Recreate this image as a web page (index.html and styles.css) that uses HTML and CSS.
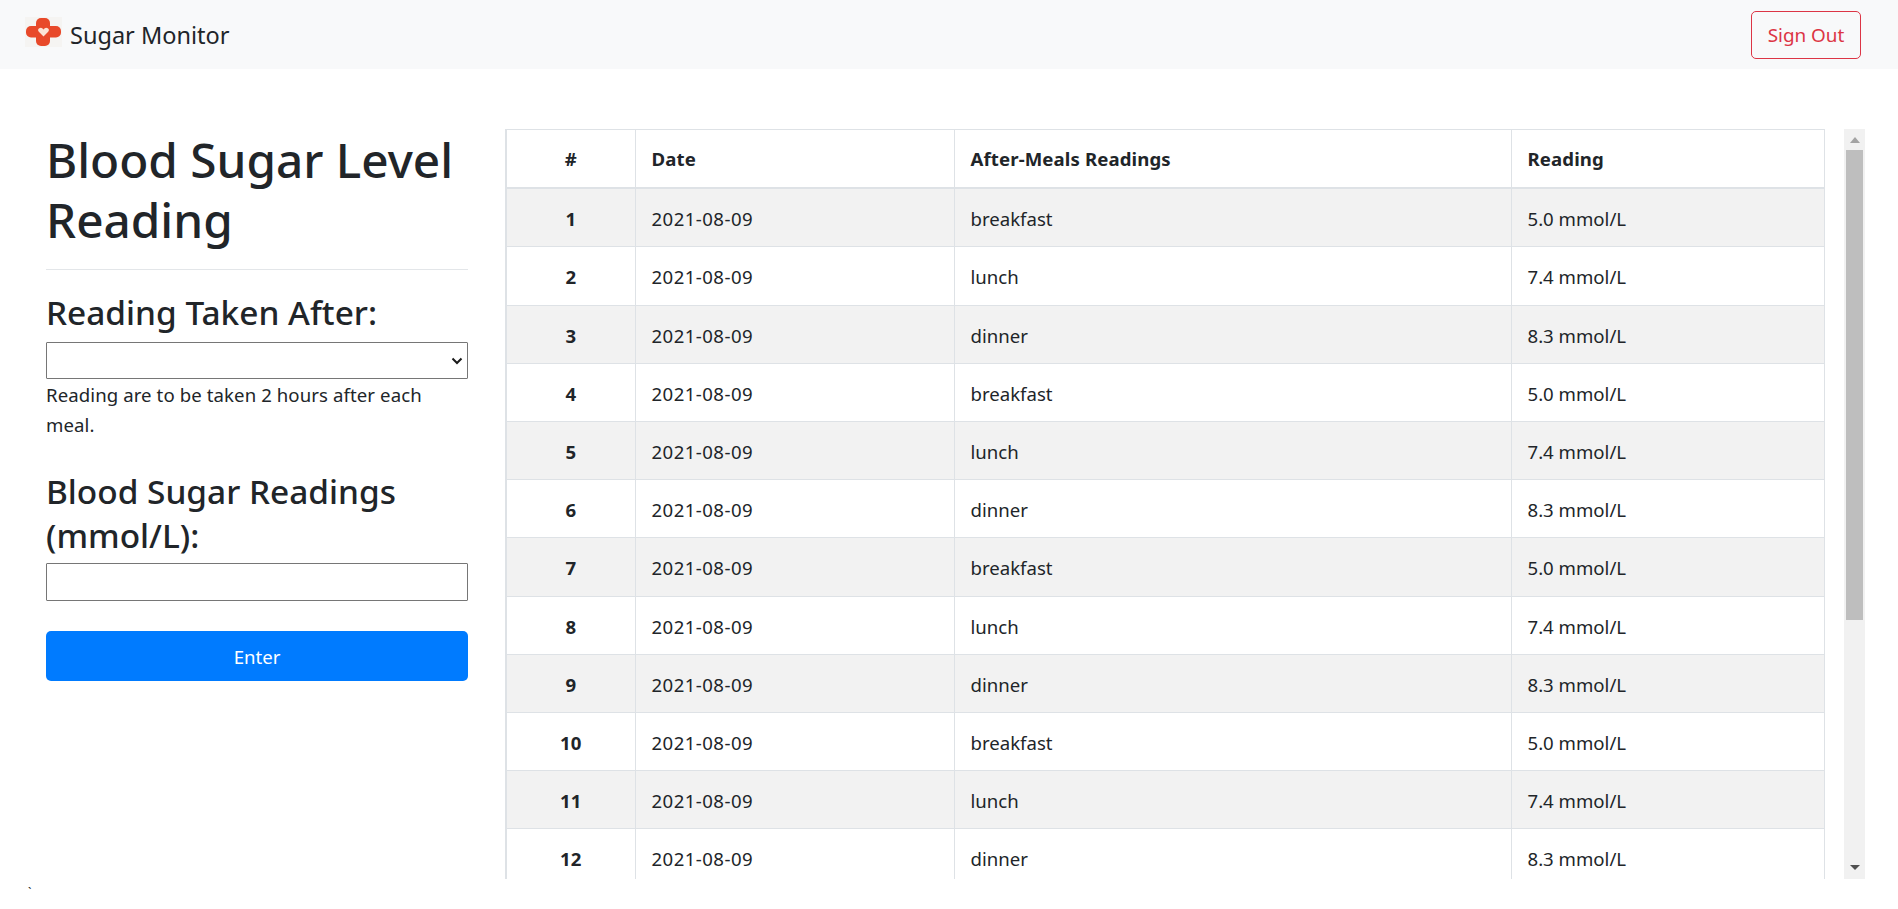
FILE: index.html
```html
<!DOCTYPE html>
<html lang="en">
<head>
<meta charset="utf-8">
<title>Sugar Monitor</title>
<link rel="stylesheet" href="styles.css">
</head>
<body>
<nav class="navbar">
  <a class="brand" href="#">
    <svg class="logo" viewBox="0 0 37 30" aria-hidden="true">
      <rect width="37" height="30" fill="#f5f4f2"/>
      <rect x="11" y="1" width="14" height="28" rx="5" fill="#e8492a"/>
      <rect x="1" y="9" width="35" height="11.5" rx="5" fill="#e8492a"/>
      <path d="M18.5 19.5 L13.8 14.8 Q12.2 12.6 14.2 11.2 Q16.8 10 18.5 12.4 Q20.2 10 22.8 11.2 Q24.8 12.6 23.2 14.8 Z" fill="#fbe3d6"/>
    </svg>
    <span>Sugar Monitor</span>
  </a>
  <button class="signout" type="button">Sign Out</button>
</nav>
<main class="layout">
  <section class="sidebar">
    <h1 class="title">Blood Sugar Level Reading</h1>
    <hr class="rule">
    <form class="reading-form">
      <label class="label label-first" for="meal">Reading Taken After:</label>
      <div class="select-wrap">
        <select class="control select" id="meal"><option></option></select>
        <svg class="chevron" viewBox="0 0 12 8" aria-hidden="true"><path d="M1.5 1.5 L6 6 L10.5 1.5" fill="none" stroke="#1a1a1a" stroke-width="2"/></svg>
      </div>
      <p class="hint">Reading are to be taken 2 hours after each meal.</p>
      <label class="label label-second" for="value">Blood Sugar Readings (mmol/L):</label>
      <input class="control input" id="value" type="text">
      <button class="enter" type="button">Enter</button>
    </form>
  </section>
  <section class="table-pane">
    <table class="readings">
      <thead>
        <tr><th class="c-num">#</th><th class="c-date">Date</th><th class="c-meal">After-Meals Readings</th><th>Reading</th></tr>
      </thead>
      <tbody>
        <tr><th>1</th><td class="date">2021-08-09</td><td>breakfast</td><td>5.0 mmol/L</td></tr>
        <tr><th>2</th><td class="date">2021-08-09</td><td>lunch</td><td>7.4 mmol/L</td></tr>
        <tr><th>3</th><td class="date">2021-08-09</td><td>dinner</td><td>8.3 mmol/L</td></tr>
        <tr><th>4</th><td class="date">2021-08-09</td><td>breakfast</td><td>5.0 mmol/L</td></tr>
        <tr><th>5</th><td class="date">2021-08-09</td><td>lunch</td><td>7.4 mmol/L</td></tr>
        <tr><th>6</th><td class="date">2021-08-09</td><td>dinner</td><td>8.3 mmol/L</td></tr>
        <tr><th>7</th><td class="date">2021-08-09</td><td>breakfast</td><td>5.0 mmol/L</td></tr>
        <tr><th>8</th><td class="date">2021-08-09</td><td>lunch</td><td>7.4 mmol/L</td></tr>
        <tr><th>9</th><td class="date">2021-08-09</td><td>dinner</td><td>8.3 mmol/L</td></tr>
        <tr><th>10</th><td class="date">2021-08-09</td><td>breakfast</td><td>5.0 mmol/L</td></tr>
        <tr><th>11</th><td class="date">2021-08-09</td><td>lunch</td><td>7.4 mmol/L</td></tr>
        <tr><th>12</th><td class="date">2021-08-09</td><td>dinner</td><td>8.3 mmol/L</td></tr>
      </tbody>
    </table>
  </section>
  <div class="scrollbar" aria-hidden="true">
    <span class="arrow arrow-up"></span>
    <span class="thumb"></span>
    <span class="arrow arrow-down"></span>
  </div>
</main>
<div class="stray">`</div>
</body>
</html>
```
FILE: styles.css
```css
* { box-sizing: border-box; }
html, body { height: 100%; }
body {
  margin: 0;
  overflow: hidden;
  background: #fff;
  color: #212529;
  font-family: "Noto Sans", "Open Sans", "Liberation Sans", sans-serif;
  font-size: 18.6px;
}
.navbar {
  height: 69px;
  background: #f8f9fa;
  display: flex;
  align-items: center;
  justify-content: space-between;
  padding: 0 37px 0 25px;
}
.brand {
  display: flex;
  align-items: center;
  gap: 8px;
  color: #212529;
  text-decoration: none;
  font-size: 23.5px;
}
.logo { width: 37px; height: 30px; display: block; margin-bottom: 5px; }
.signout {
  width: 110px;
  height: 48px;
  background: transparent;
  border: 1px solid #dc3545;
  border-radius: 5px;
  color: #dc3545;
  font: inherit;
  font-size: 18.9px;
}
.layout {
  display: flex;
  height: 750px;
  margin-top: 60px;
  padding-left: 46px;
}
.sidebar { flex: 0 0 422px; margin-right: 37px; }
.title {
  margin: 0;
  padding-top: 1px;
  font-size: 47.7px;
  font-weight: 500;
  line-height: 60px;
}
.rule {
  margin: 19px 0 0;
  border: 0;
  border-top: 1px solid #e3e6e9;
}
.reading-form { display: flex; flex-direction: column; }
.label {
  font-size: 33.4px;
  font-weight: 500;
  line-height: 44px;
}
.label-first { margin-top: 20px; margin-bottom: 8px; }
.label-second { margin-top: 29px; margin-bottom: 6px; }
.control {
  display: block;
  width: 100%;
  background: #fff;
  border: 1px solid #767676;
  border-radius: 1px;
  font: inherit;
}
.select-wrap { position: relative; }
.select { height: 37px; appearance: none; }
.chevron { position: absolute; right: 5px; top: 15px; width: 12px; height: 8px; pointer-events: none; }
.input { height: 38px; }
.hint {
  margin: 1px 0 0;
  line-height: 30px;
  letter-spacing: 0.09px;
}
.enter {
  margin-top: 30px;
  height: 50px;
  background: #007bff;
  border: 0;
  border-radius: 5px;
  color: #fff;
  font: inherit;
  font-size: 18.6px;
}
.table-pane { flex: 0 0 1320px; margin-right: 19px; overflow: hidden; height: 750px; }
.readings {
  width: 100%;
  border-collapse: collapse;
  table-layout: fixed;
  border-left: 2px solid #dee2e6;
}
.readings th, .readings td {
  border: 1px solid #dee2e6;
  padding: 15px 16px;
  line-height: 27.2px;
  text-align: left;
  font-size: 18.6px;
}
.readings tbody th, .readings tbody td { padding-top: 16px; padding-bottom: 14px; }
.readings thead th { border-bottom: 2px solid #dee2e6; font-weight: 700; letter-spacing: 0.12px; }
.readings tbody th, .readings .c-num { text-align: center; font-weight: 700; }
.readings tbody tr:nth-child(odd) { background: #f2f2f2; }
.readings .date { letter-spacing: 0.45px; }
.c-num { width: 129px; }
.c-date { width: 319px; }
.c-meal { width: 557px; }
.scrollbar {
  flex: 0 0 21px;
  height: 750px;
  background: #f1f1f1;
  display: flex;
  flex-direction: column;
  align-items: center;
}
.arrow { width: 0; height: 0; border-left: 5px solid transparent; border-right: 5px solid transparent; }
.arrow-up { margin-top: 8px; border-bottom: 6px solid #a3a3a3; }
.arrow-down { margin-top: auto; margin-bottom: 9px; border-top: 5px solid #505050; }
.thumb { width: 17px; height: 470px; margin-top: 7px; background: #bebebe; }
.stray {
  position: absolute;
  left: 28px;
  top: 885px;
  font-size: 12px;
  line-height: 16px;
}
```
